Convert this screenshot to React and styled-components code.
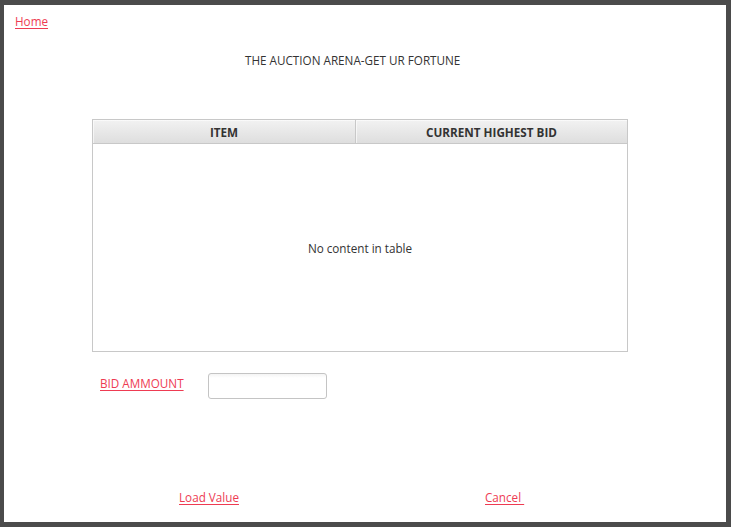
import React from "react";
import styled, { createGlobalStyle } from "styled-components";

const Global = createGlobalStyle`
  html, body { margin: 0; padding: 0; background: #4b4b4b; }
  body { font-family: "Open Sans", "Noto Sans", sans-serif; font-size: 11.7px; }
`;

const Frame = styled.div`
  width: 731px;
  height: 527px;
  box-sizing: border-box;
  border-style: solid;
  border-color: #4b4b4b;
  border-width: 5px 5px 5px 4px;
  background: #ffffff;
  display: flex;
  flex-direction: column;
`;

const Link = styled.a`
  color: #ee3b52;
  text-decoration: underline;
  text-underline-offset: 2px;
  font-size: 11.7px;
  line-height: 16px;
  cursor: pointer;
  white-space: pre;
`;

const TopBar = styled.div`
  display: flex;
  padding: 8px 0 0 11px;
`;

const Title = styled.div`
  margin: 23px 0 0 241px;
  font-size: 11.7px;
  line-height: 16px;
  color: #333333;
`;

const Table = styled.div`
  margin: 51px 0 0 88px;
  width: 536px;
  height: 233px;
  box-sizing: border-box;
  border: 1px solid #c8c8c8;
  display: flex;
  flex-direction: column;
`;

const HeaderRow = styled.div`
  display: grid;
  grid-template-columns: 263px 1fr;
  height: 24px;
  box-sizing: border-box;
  border-bottom: 1px solid #c8c8c8;
  background: linear-gradient(#f2f2f2, #dedede);
`;

const HeaderCell = styled.div`
  display: flex;
  align-items: center;
  justify-content: center;
  font-weight: 700;
  font-size: 11.7px;
  color: #333333;
  border-right: ${(p) => (p.$divider ? "1px solid #c8c8c8" : "none")};
  box-shadow: inset 1px 1px 0 rgba(255, 255, 255, 0.6);
`;

const Body = styled.div`
  flex: 1;
  display: flex;
  align-items: center;
  justify-content: center;
  color: #333333;
  font-size: 11.7px;
`;

const BidRow = styled.div`
  display: grid;
  grid-template-columns: 108px 119px;
  align-items: start;
  margin: 21px 0 0 96px;
`;

const BidLabel = styled(Link)`
  margin-top: 2px;
  justify-self: start;
`;

const Input = styled.input`
  width: 119px;
  height: 26px;
  box-sizing: border-box;
  border: 1px solid #c4c4c4;
  border-radius: 3px;
  background: linear-gradient(#f4f4f4, #ffffff 4px);
  outline: none;
  padding: 0 6px;
  font-family: inherit;
`;

const BottomRow = styled.div`
  display: grid;
  grid-template-columns: 306px auto;
  justify-items: start;
  margin: 90px 0 0 175px;
`;

export default function App() {
  return (
    <>
      <Global />
      <Frame>
        <TopBar>
          <Link>Home</Link>
        </TopBar>
        <Title>THE AUCTION ARENA-GET UR FORTUNE</Title>
        <Table>
          <HeaderRow>
            <HeaderCell $divider>ITEM</HeaderCell>
            <HeaderCell>CURRENT HIGHEST BID</HeaderCell>
          </HeaderRow>
          <Body>No content in table</Body>
        </Table>
        <BidRow>
          <BidLabel>BID AMMOUNT</BidLabel>
          <Input />
        </BidRow>
        <BottomRow>
          <Link>Load Value</Link>
          <Link>{"Cancel "}</Link>
        </BottomRow>
      </Frame>
    </>
  );
}
